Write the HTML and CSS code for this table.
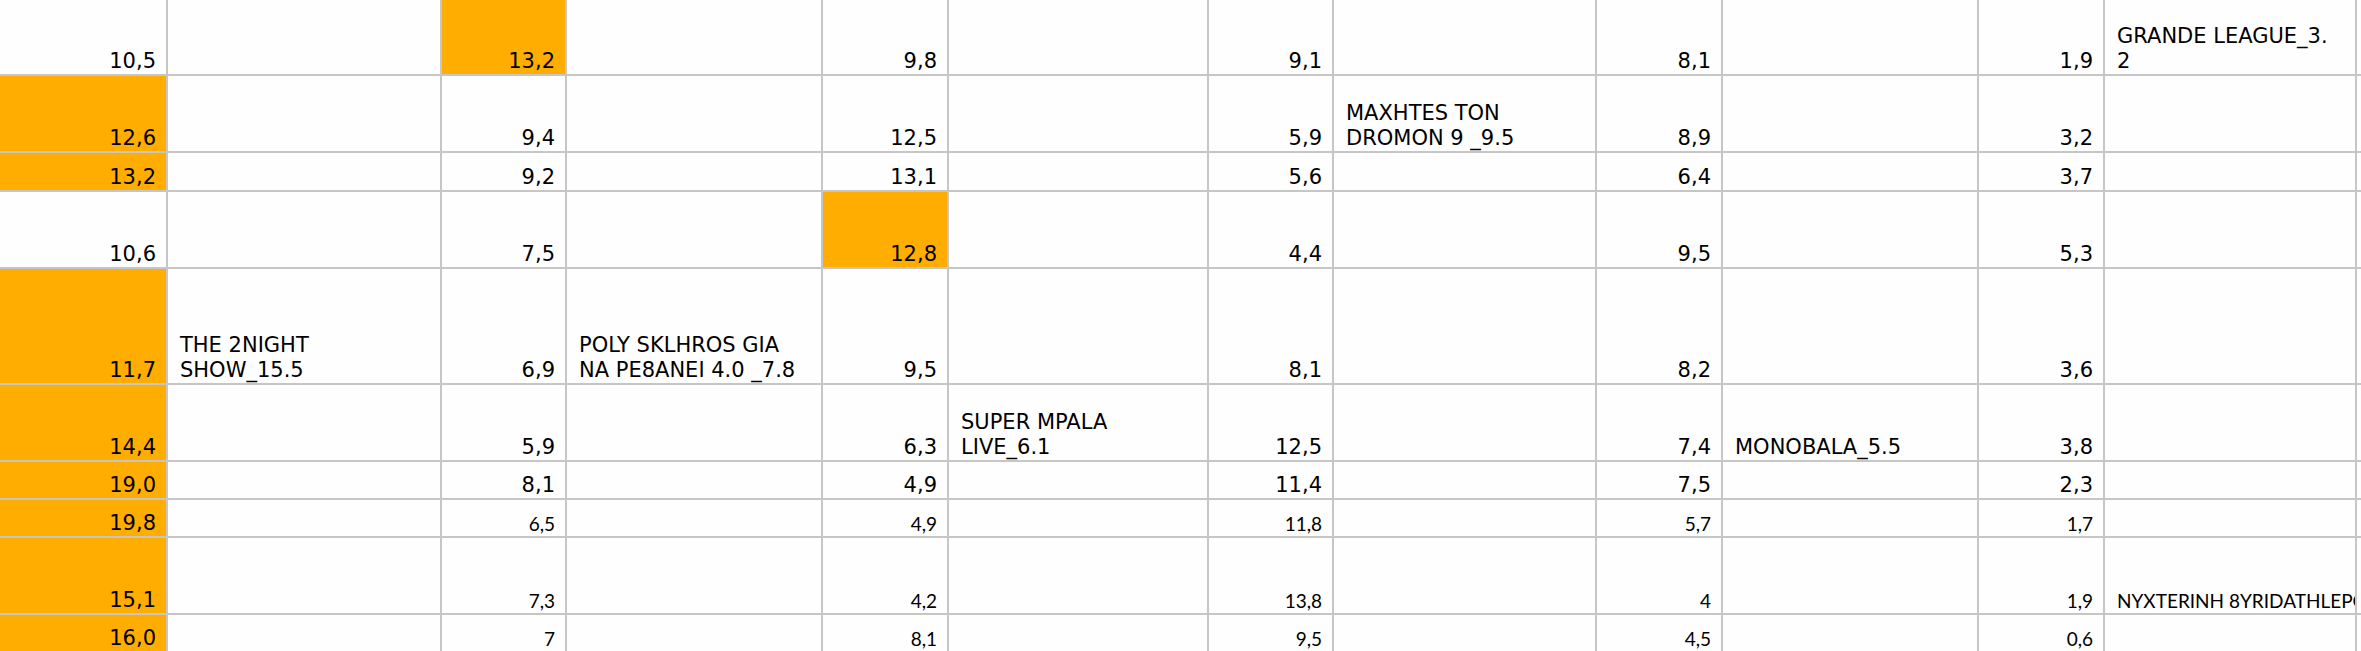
FILE: index.html
```html
<!DOCTYPE html>
<html>
<head>
<meta charset="utf-8">
<link rel="stylesheet" href="styles.css">
</head>
<body>
<div class="sheet">
  <!-- row 1 -->
  <div class="c n">10,5</div><div class="c t"></div><div class="c n o">13,2</div><div class="c t"></div><div class="c n">9,8</div><div class="c t"></div><div class="c n">9,1</div><div class="c t"></div><div class="c n">8,1</div><div class="c t"></div><div class="c n">1,9</div><div class="c t">GRANDE LEAGUE_3.<br>2</div><div class="c t"></div>
  <!-- row 2 -->
  <div class="c n o">12,6</div><div class="c t"></div><div class="c n">9,4</div><div class="c t"></div><div class="c n">12,5</div><div class="c t"></div><div class="c n">5,9</div><div class="c t">MAXHTES TON<br>DROMON 9 _9.5</div><div class="c n">8,9</div><div class="c t"></div><div class="c n">3,2</div><div class="c t"></div><div class="c t"></div>
  <!-- row 3 -->
  <div class="c n o">13,2</div><div class="c t"></div><div class="c n">9,2</div><div class="c t"></div><div class="c n">13,1</div><div class="c t"></div><div class="c n">5,6</div><div class="c t"></div><div class="c n">6,4</div><div class="c t"></div><div class="c n">3,7</div><div class="c t"></div><div class="c t"></div>
  <!-- row 4 -->
  <div class="c n">10,6</div><div class="c t"></div><div class="c n">7,5</div><div class="c t"></div><div class="c n o">12,8</div><div class="c t"></div><div class="c n">4,4</div><div class="c t"></div><div class="c n">9,5</div><div class="c t"></div><div class="c n">5,3</div><div class="c t"></div><div class="c t"></div>
  <!-- row 5 -->
  <div class="c n o">11,7</div><div class="c t">THE 2NIGHT<br>SHOW_15.5</div><div class="c n">6,9</div><div class="c t">POLY SKLHROS GIA<br>NA PE8ANEI 4.0 _7.8</div><div class="c n">9,5</div><div class="c t"></div><div class="c n">8,1</div><div class="c t"></div><div class="c n">8,2</div><div class="c t"></div><div class="c n">3,6</div><div class="c t"></div><div class="c t"></div>
  <!-- row 6 -->
  <div class="c n o">14,4</div><div class="c t"></div><div class="c n">5,9</div><div class="c t"></div><div class="c n">6,3</div><div class="c t">SUPER MPALA<br>LIVE_6.1</div><div class="c n">12,5</div><div class="c t"></div><div class="c n">7,4</div><div class="c t">MONOBALA_5.5</div><div class="c n">3,8</div><div class="c t"></div><div class="c t"></div>
  <!-- row 7 -->
  <div class="c n o">19,0</div><div class="c t"></div><div class="c n">8,1</div><div class="c t"></div><div class="c n">4,9</div><div class="c t"></div><div class="c n">11,4</div><div class="c t"></div><div class="c n">7,5</div><div class="c t"></div><div class="c n">2,3</div><div class="c t"></div><div class="c t"></div>
  <!-- row 8 -->
  <div class="c n o">19,8</div><div class="c t"></div><div class="c n s">6,5</div><div class="c t"></div><div class="c n s">4,9</div><div class="c t"></div><div class="c n s">11,8</div><div class="c t"></div><div class="c n s">5,7</div><div class="c t"></div><div class="c n s">1,7</div><div class="c t"></div><div class="c t"></div>
  <!-- row 9 -->
  <div class="c n o">15,1</div><div class="c t"></div><div class="c n s">7,3</div><div class="c t"></div><div class="c n s">4,2</div><div class="c t"></div><div class="c n s">13,8</div><div class="c t"></div><div class="c n s">4</div><div class="c t"></div><div class="c n s">1,9</div><div class="c t s">NYXTERINH 8YRIDATHLEPC</div><div class="c t"></div>
  <!-- row 10 -->
  <div class="c n o">16,0</div><div class="c t"></div><div class="c n s">7</div><div class="c t"></div><div class="c n s">8,1</div><div class="c t"></div><div class="c n s">9,5</div><div class="c t"></div><div class="c n s">4,5</div><div class="c t"></div><div class="c n s">0,6</div><div class="c t"></div><div class="c t"></div>
</div>
</body>
</html>
```

FILE: styles.css
```css
html, body {
  margin: 0;
  padding: 0;
  background: #ffffff;
  overflow: hidden;
}

.sheet {
  display: grid;
  grid-template-columns: 166px 272px 123px 254px 124px 258px 123px 261px 124px 254px 124px 250px 1fr;
  grid-template-rows: 74px 75px 37px 75px 114px 75px 36px 36px 75px 36px;
  gap: 2px;
  background: #c6c6c6;
  width: 2361px;
  height: 651px;
  overflow: hidden;
}

.c {
  background: #fefefe;
  display: flex;
  align-items: flex-end;
  overflow: hidden;
  white-space: nowrap;
  color: #000000;
  font-family: "DejaVu Sans", Verdana, sans-serif;
  font-size: 21px;
  line-height: 25px;
}

.n {
  justify-content: flex-end;
  padding: 0 10px 0 6px;
}

.t {
  justify-content: flex-start;
  padding: 0 6px 0 12px;
}

.o {
  background: #ffad00;
}

.s {
  font-family: Lato, "Open Sans", sans-serif;
  font-size: 19px;
  line-height: 24px;
}
```
